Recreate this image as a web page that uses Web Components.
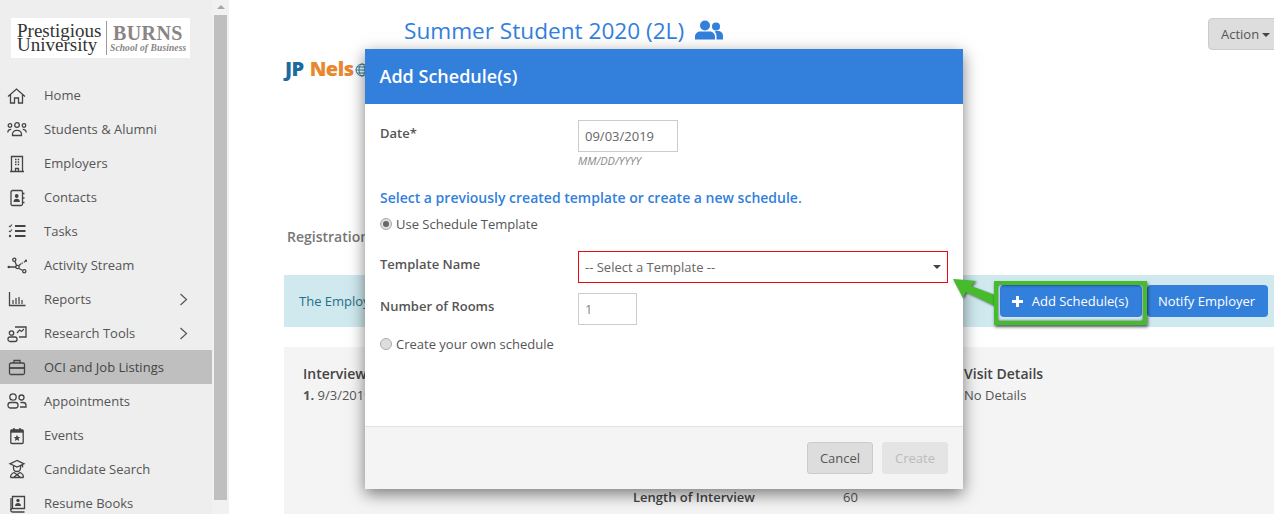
<!DOCTYPE html>
<html>
<head>
<meta charset="utf-8">
<title>Add Schedule</title>
<style>
  html, body { margin: 0; height: 514px; overflow: hidden; background: #fff; }
  body { font-family: 'Open Sans', 'Liberation Sans', sans-serif; font-size: 13px; color: #555; display: flex; position: relative; }
</style>
</head>
<body>

<app-sidebar>
  <nav-item icon="home">Home</nav-item>
  <nav-item icon="students">Students &amp; Alumni</nav-item>
  <nav-item icon="employers">Employers</nav-item>
  <nav-item icon="contacts">Contacts</nav-item>
  <nav-item icon="tasks">Tasks</nav-item>
  <nav-item icon="activity">Activity Stream</nav-item>
  <nav-item icon="reports" more>Reports</nav-item>
  <nav-item icon="research" more>Research Tools</nav-item>
  <nav-item icon="oci" active>OCI and Job Listings</nav-item>
  <nav-item icon="appointments">Appointments</nav-item>
  <nav-item icon="events">Events</nav-item>
  <nav-item icon="candidate">Candidate Search</nav-item>
  <nav-item icon="resume">Resume Books</nav-item>
</app-sidebar>

<job-page></job-page>

<schedule-modal></schedule-modal>

<button-callout></button-callout>

<script>
const ICONS = {
  home: '<path d="M1 11.500 9.500 4l8.500 7.500M3.500 9.500V18h4v-5h4v5h4V9.500"/>',
  students: '<circle cx="3" cy="6.500" r="1.800"/><circle cx="10" cy="6" r="2.300"/><circle cx="17" cy="6.500" r="1.800"/><path d="M5.500 16.500c-.5-3.500 1.500-5.200 4.500-5.200s5 1.700 4.500 5.200zM.8 13.500c0-2 1.200-3.200 3.400-3.200M19.200 13.500c0-2-1.200-3.200-3.400-3.200"/>',
  employers: '<path d="M4.500 18.500v-15h11v15M3 18.500h14M8.500 18.500v-3h3v3"/><path stroke-width="1.500" stroke-dasharray="1.500 1.200" d="M8 6.500h4.500M8 9h4.500M8 11.500h4.500"/>',
  contacts: '<rect x="4" y="3.500" width="11.500" height="15" rx="1.500"/><path d="M16 6.500h1.500M16 11h1.500M16 15.500h1.500"/><circle cx="9.700" cy="9" r="1.900" fill="#444" stroke="none"/><path d="M6.500 15c0-2.500 1.400-3.300 3.200-3.300s3.200.8 3.200 3.300z" fill="#444" stroke="none"/>',
  tasks: '<path stroke-width="1.800" d="M8 5h10.500M8 10h10.500M8 15h10.500"/><path stroke-width="1.100" d="M2 4.800l1 1 2-2.300M2 9.800l1 1 2-2.300"/><circle cx="3" cy="15" r="1.200" fill="#444" stroke="none"/>',
  activity: '<path d="M2 12h7M8 6.500l1.500 4M12 13.500l3.800 2M12 10.500l2-1.800"/><path stroke-dasharray="1.500 1.200" d="M14.500 8.500l3.500-2"/><circle cx="1.800" cy="12" r="1.300" fill="#444" stroke="none"/><circle cx="7.300" cy="4.800" r="1.600"/><circle cx="10.500" cy="12" r="1.700"/><circle cx="19" cy="5.800" r="1.200" fill="#444" stroke="none"/><circle cx="17.300" cy="16.300" r="1.600"/>',
  reports: '<path d="M2.500 3v13.500H18.500"/><path stroke-width="1.200" d="M6 15v-4M9 15V9M12 15v-7M15 15v-4"/>',
  research: '<path d="M8 4h11v10h-7"/><path stroke-width="1.200" d="M10 10l2.500-3 2 1.500 2.500-2.500"/><circle cx="4.500" cy="10" r="2.200"/><rect x="1" y="14" width="9" height="4.500" rx="2"/>',
  oci: '<rect x="2.500" y="6" width="15" height="11.500" rx="1.500"/><path d="M7 6V3.500h6V6"/><path stroke-width="1.800" d="M2.500 11h15"/>',
  appointments: '<circle cx="6" cy="6" r="3.200"/><rect x="1" y="11.500" width="10" height="5.500" rx="2.500"/><circle cx="14.500" cy="6.500" r="2.500"/><path d="M13.500 11.500h2.500c2 0 3 1.200 3 2.700V16h-6"/>',
  events: '<rect x="3.800" y="5" width="12.400" height="13.500" rx="1"/><path stroke-width="3" d="M3.800 6.200h12.400"/><path stroke-width="1.500" d="M7 3v2.500M13 3v2.500"/><path fill="#444" stroke="none" d="M10 9.700l1 2.200 2.300.2-1.700 1.500.5 2.300-2.100-1.200-2.100 1.200.5-2.300-1.700-1.500 2.300-.2z"/>',
  candidate: '<path d="M10 1.500 3 4.800l7 3.200 7-3.200zM15.500 5.500v3"/><path d="M6.500 7v2c0 2 1.500 3.500 3.500 3.500s3.500-1.500 3.500-3.500V7"/><path d="M7 13.500l6 4.500M13 13.500 7 18M3.500 18.500c0-2.500 1-4 3.500-5M16.500 18.500c0-2.500-1-4-3.500-5M3.500 18.500h13"/>',
  resume: '<path d="M5.500 15.500V3.500h12V15.500H5.500a1.700 1.700 0 0 0 0 3.500h12"/><path d="M4 17V5" /><circle cx="11" cy="7.500" r="1.700" fill="#444" stroke="none"/><path d="M8 13c0-2 1.300-3 3-3s3 1 3 3z" fill="#444" stroke="none"/>'
};

class AppSidebar extends HTMLElement {
  constructor() {
    super();
    this.attachShadow({ mode: 'open' });
    this.shadowRoot.innerHTML = `
      <style>
        :host { display: flex; flex: none; width: 229px; height: 514px; background: #f1f1f1; overflow: hidden; }
        .nav { width: 212px; flex: none; background: #eee; height: 514px; overflow: hidden; }
        .logo { display: flex; align-items: center; width: 179px; height: 40px; margin: 18px 0 20px 11px; background: #fff; color: #333; font-family: 'Liberation Serif', serif; box-sizing: border-box; padding-left: 6px; }
        .pu { font-size: 19px; line-height: 14px; width: 85px; flex: none; padding-right: 4px; border-right: 1px solid #999; height: 34px; display: flex; align-items: center; }
        .burns { color: #8a8484; padding-left: 3px; white-space: nowrap; }
        .burns b { display: block; font-size: 20px; line-height: 20px; letter-spacing: .4px; padding-left: 3px; }
        .burns i { display: block; font-size: 9.500px; line-height: 11px; font-weight: bold; letter-spacing: .1px; }
        .bar { width: 17px; flex: none; position: relative; padding-left: 2px; box-sizing: border-box; }
        .up { width: 0; height: 0; margin: 5px auto 0 3px; border: 4px solid transparent; border-top: 0; border-bottom: 4px solid #a8a8a8; }
        .thumb { width: 13px; height: 485px; margin-top: 6px; background: #bfbfbf; }
      </style>
      <div class="nav">
        <div class="logo">
          <div class="pu"><span>Prestigious University</span></div>
          <div class="burns"><b>BURNS</b><i>School of Business</i></div>
        </div>
        <slot></slot>
      </div>
      <div class="bar"><div class="up"></div><div class="thumb"></div></div>
    `;
  }
}
customElements.define('app-sidebar', AppSidebar);

class NavItem extends HTMLElement {
  constructor() {
    super();
    this.attachShadow({ mode: 'open' });
    this.shadowRoot.innerHTML = `
      <style>
        :host { display: flex; align-items: center; height: 34px; padding-left: 7px; font-size: 13px; color: #555; box-sizing: border-box; position: relative; }
        :host([active]) { background: #bfbfbf; color: #444; }
        svg.ic { width: 20px; height: 20px; flex: none; margin-right: 17px; fill: none; stroke: #444; stroke-width: 1.300; }
        svg.more { display: none; position: absolute; left: 179px; top: 11px; width: 9px; height: 13px; fill: none; stroke: #555; stroke-width: 1.200; }
        :host([more]) svg.more { display: block; }
      </style>
      <svg class="ic" viewBox="0 0 20 20"></svg>
      <slot></slot>
      <svg class="more" viewBox="0 0 9 13"><path d="M1.500 1 7.500 6.500 1.500 12"/></svg>
    `;
  }
  connectedCallback() {
    this.shadowRoot.querySelector('.ic').innerHTML = ICONS[this.getAttribute('icon')] || '';
  }
}
customElements.define('nav-item', NavItem);

class JobPage extends HTMLElement {
  constructor() {
    super();
    this.attachShadow({ mode: 'open' });
    this.shadowRoot.innerHTML = `
      <style>
        :host { display: block; flex: 1; min-width: 0; height: 514px; overflow: hidden; padding-left: 55px; box-sizing: border-box; }
        .top { display: flex; align-items: flex-start; height: 58px; }
        h1 { margin: 16px 0 0 120px; font-size: 22.600px; line-height: 30px; font-weight: 400; color: #337fdc; white-space: nowrap; display: flex; align-items: center; gap: 11px; }
        h1 svg { width: 28px; height: 20px; fill: #337fdc; margin-top: -2px; }
        .action { margin: 18px -8px 0 auto; width: 74px; height: 32px; box-sizing: border-box; background: #ddd; border: 1px solid #ccc; border-radius: 4px; padding-left: 12px; line-height: 30px; color: #555; white-space: nowrap; }
        .caret { display: inline-block; border: 4px solid transparent; border-top-color: #444; border-bottom: 0; vertical-align: 2px; margin-left: 3px; }
        .brand { display: flex; align-items: center; gap: 1px; height: 22px; font-size: 20px; font-weight: 800; line-height: 22px; letter-spacing: -.5px; margin-left: 1px; }
        .brand .jp { color: #1c6a9e; margin-right: 5px; }
        .brand .nels { color: #e8872e; }
        .brand svg { width: 14px; height: 14px; margin-top: 2px; fill: none; stroke: #2f7d95; stroke-width: 1; }
        .tab { margin: 146px 0 0 3px; height: 22px; line-height: 22px; font-size: 14px; font-weight: 600; color: #777; }
        .alert { display: flex; align-items: center; height: 52px; margin-top: 27px; background: #cfe9ee; padding-left: 15px; color: #24708a; position: relative; }
        .actions { display: flex; gap: 5px; margin-left: auto; margin-right: 6px; }
        .btn { height: 32px; line-height: 32px; background: #337fdc; color: #fff; border-radius: 4px; text-align: center; white-space: nowrap; }
        .btn.add { width: 142px; box-sizing: border-box; padding-right: 2px; display: flex; justify-content: center; align-items: center; gap: 9px; }
        .btn.add svg { width: 11px; height: 11px; fill: #fff; }
        .btn.notify { width: 121px; box-sizing: border-box; padding-right: 2px; }
        .panel { display: grid; grid-template-columns: 330px 331px 1fr; margin-top: 20px; height: 170px; background: #f4f4f4; padding: 17px 0 0 19px; box-sizing: border-box; }
        h3 { margin: 0; font-size: 14px; line-height: 20px; font-weight: 600; color: #444; }
        p { margin: 1px 0 0; line-height: 20px; color: #555; }
        .len { display: flex; padding-top: 123px; line-height: 20px; }
        .len b { width: 210px; font-weight: 600; color: #444; }
      </style>
      <div class="top">
        <h1>Summer Student 2020 (2L)
          <svg viewBox="0 0 28 20"><circle cx="10" cy="5.500" r="5"/><path d="M0 19.500v-2.700C0 13.500 2.500 11.500 5.500 11.500h9c3 0 5.500 2 5.500 5.300v2.700z"/><circle cx="21" cy="6.500" r="4"/><path d="M21.500 19.500v-3.500c0-1.800-.7-3.300-1.800-4.500 1-.5 2-.6 3.300-.6 2.700 0 5 1.900 5 4.600v4z"/></svg>
        </h1>
        <div class="action">Action<span class="caret"></span></div>
      </div>
      <div class="brand"><span class="jp">JP</span><span class="nels">Nels</span>
        <svg viewBox="0 0 14 14"><circle cx="7" cy="7" r="6"/><ellipse cx="7" cy="7" rx="3" ry="6"/><path d="M1 7h12M2 4h10M2 10h10"/></svg>
      </div>
      <div class="tab">Registration</div>
      <div class="alert">
        <span>The Employer</span>
        <div class="actions">
          <div class="btn add"><svg viewBox="0 0 11 11"><path d="M4 0h3v4h4v3H7v4H4V7H0V4h4z"/></svg><span>Add Schedule(s)</span></div>
          <div class="btn notify">Notify Employer</div>
        </div>
      </div>
      <div class="panel">
        <div><h3>Interview</h3><p><b>1.</b> 9/3/2019</p></div>
        <div class="len"><b>Length of Interview</b><span>60</span></div>
        <div><h3>Visit Details</h3><p>No Details</p></div>
      </div>
    `;
  }
}
customElements.define('job-page', JobPage);

class ScheduleModal extends HTMLElement {
  constructor() {
    super();
    this.attachShadow({ mode: 'open' });
    this.shadowRoot.innerHTML = `
      <style>
        :host { display: flex; flex-direction: column; position: absolute; left: 365px; top: 49px; width: 598px; height: 440px; background: #fff; box-shadow: 0 5px 15px rgba(0,0,0,.5); color: #555; font-size: 13px; }
        header { height: 55px; background: #337fdc; color: #fff; font-size: 18px; font-weight: 600; line-height: 55px; padding-left: 14.500px; flex: none; }
        .body { flex: 1; padding: 16px 15px 0; }
        .row { display: grid; grid-template-columns: 198px 1fr; }
        .row label { font-weight: 600; color: #555; line-height: 26px; }
        .field { box-sizing: border-box; height: 32px; line-height: 30px; border: 1px solid #ccc; padding-left: 6px; color: #666; background: #fff; }
        .date { width: 100px; }
        .rooms { width: 59px; color: #888; }
        .select { width: 370px; border-color: #e8090f; position: relative; }
        .select::after { content: ''; position: absolute; right: 6px; top: 13px; border: 4px solid transparent; border-top-color: #444; border-bottom: 0; }
        .hint { font-size: 11px; font-style: italic; color: #888; line-height: 18px; }
        h4 { margin: 18px 0 0; font-size: 14px; font-weight: 600; line-height: 20px; color: #337fdc; }
        .radio { display: flex; align-items: center; gap: 4px; line-height: 20px; }
        .dot { width: 12px; height: 12px; box-sizing: border-box; border-radius: 50%; border: 1px solid #aaa; background: #dedede; position: relative; flex: none; }
        .dot.on::after { content: ''; position: absolute; left: 2px; top: 2px; width: 6px; height: 6px; border-radius: 50%; background: #666; }
        footer { flex: none; height: 63px; box-sizing: border-box; background: #f4f4f4; border-top: 1px solid #e2e2e2; display: flex; justify-content: flex-end; gap: 9px; padding: 15px 15px 0 0; }
        .btn { box-sizing: border-box; width: 66px; height: 32px; line-height: 30px; text-align: center; border-radius: 3px; border: 1px solid #ccc; background: #ddd; color: #555; }
        .btn.off { background: #e4e4e4; border-color: #e4e4e4; color: #bbb; }
      </style>
      <header>Add Schedule(s)</header>
      <div class="body">
        <div class="row"><label>Date*</label><div><div class="field date">09/03/2019</div><div class="hint">MM/DD/YYYY</div></div></div>
        <h4>Select a previously created template or create a new schedule.</h4>
        <div class="radio" style="margin-top:6px"><span class="dot on"></span>Use Schedule Template</div>
        <div class="row" style="margin-top:17px"><label>Template Name</label><div class="field select">-- Select a Template --</div></div>
        <div class="row" style="margin-top:10px"><label>Number of Rooms</label><div class="field rooms">1</div></div>
        <div class="radio" style="margin-top:9px"><span class="dot"></span>Create your own schedule</div>
      </div>
      <footer><div class="btn">Cancel</div><div class="btn off">Create</div></footer>
    `;
  }
}
customElements.define('schedule-modal', ScheduleModal);

// green highlight and arrow drawn on top of the screenshot
class ButtonCallout extends HTMLElement {
  constructor() {
    super();
    this.attachShadow({ mode: 'open' });
    this.shadowRoot.innerHTML = `
      <style>
        :host { display: block; position: absolute; left: 950px; top: 274px; width: 200px; height: 56px; pointer-events: none; }
        .box { position: absolute; left: 44px; top: 7px; width: 153px; height: 44px; box-sizing: border-box; border: 4px solid #46bb2c; box-shadow: 1px 2px 3px rgba(0,0,0,.6), inset 0 0 3px rgba(0,0,50,.7); }
        svg { position: absolute; left: 0; top: 0; width: 50px; height: 40px; overflow: visible; filter: drop-shadow(1px 1px 1px rgba(0,0,0,.55)); }
      </style>
      <svg viewBox="0 0 50 40"><path fill="#46bb2c" d="M3 5 26 7 21 12 45 21V32L16 18 13 24z"/></svg>
      <div class="box"></div>
    `;
  }
}
customElements.define('button-callout', ButtonCallout);
</script>
</body>
</html>
